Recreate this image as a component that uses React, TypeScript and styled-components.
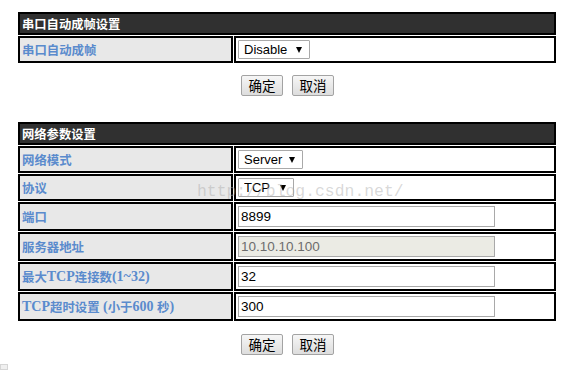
import React from "react";
import styled, { createGlobalStyle } from "styled-components";

const Global = createGlobalStyle`
  html, body { margin: 0; padding: 0; background: #fff; }
  body { font-family: "Liberation Sans", Arial, "Noto Sans CJK SC", sans-serif; }
`;

const Page = styled.div`
  position: relative;
  width: 586px;
  height: 370px;
  overflow: hidden;
  display: flex;
  flex-direction: column;
`;

const Content = styled.div`
  padding: 12px 0 0 18px;
  width: 538px;
  display: flex;
  flex-direction: column;
`;

const Section = styled.div<{ $mt?: number }>`
  display: flex;
  flex-direction: column;
  gap: 1px;
  margin-top: ${(p) => p.$mt ?? 0}px;
`;

const Header = styled.div`
  box-sizing: border-box;
  height: 23px;
  background: #303030;
  border: 2px solid #000;
  color: #fff;
  font: bold 12.3px "Liberation Serif", "Noto Sans CJK SC", serif;
  display: flex;
  align-items: center;
  padding-left: 2px;
`;

const Row = styled.div<{ $h: number }>`
  display: grid;
  grid-template-columns: 215px 1fr;
  column-gap: 1px;
  height: ${(p) => p.$h}px;
`;

const LabelCell = styled.div`
  box-sizing: border-box;
  border: 2px solid #000;
  background: #e8e8e8;
  color: #5a8bcd;
  font: bold 12.4px "Liberation Serif", "Noto Sans CJK SC", serif;
  display: flex;
  align-items: center;
  padding-left: 2px;
  white-space: pre;
`;

const Latin = styled.span`
  font-size: 14px;
`;

const ValueCell = styled.div`
  box-sizing: border-box;
  border: 2px solid #000;
  background: #fff;
  display: flex;
  align-items: center;
  padding-left: 2px;
`;

const SelectBox = styled.div<{ $w: number }>`
  position: relative;
  box-sizing: border-box;
  width: ${(p) => p.$w}px;
  height: 19px;
  border: 1px solid #a9a9a9;
  border-radius: 1px;
  background: #fff;
  display: flex;
  align-items: center;
`;

const NativeSelect = styled.select`
  appearance: none;
  -webkit-appearance: none;
  border: none;
  outline: none;
  background: transparent;
  width: 100%;
  height: 100%;
  padding: 0 0 0 5px;
  font: 13px "Liberation Sans", Arial, sans-serif;
  color: #000;
`;

const Arrow = styled.span`
  position: absolute;
  right: 7px;
  top: 6px;
  width: 0;
  height: 0;
  border-left: 3px solid transparent;
  border-right: 3px solid transparent;
  border-top: 6px solid #000;
  pointer-events: none;
`;

const TextInput = styled.input<{ $disabledLook?: boolean }>`
  box-sizing: border-box;
  width: 257px;
  height: 21px;
  border: 1px solid #a9a9a9;
  background: ${(p) => (p.$disabledLook ? "#ebebe4" : "#fff")};
  padding: 0 2px;
  font: 13.5px "Liberation Sans", Arial, sans-serif;
  color: ${(p) => (p.$disabledLook ? "#6d6d6d" : "#000")};
  outline: none;
`;

const ButtonRow = styled.div<{ $mt: number }>`
  display: flex;
  justify-content: center;
  gap: 9px;
  margin-top: ${(p) => p.$mt}px;
  padding-left: 1px;
`;

const Button = styled.button`
  box-sizing: border-box;
  width: 42px;
  height: 21px;
  border: 1px solid #a3a3a3;
  border-radius: 2px;
  background: linear-gradient(#f6f6f6, #dddddd);
  font: 13.5px "Noto Sans CJK SC", sans-serif;
  color: #000;
  padding: 0;
  display: flex;
  align-items: center;
  justify-content: center;
  line-height: 1;
`;

const Corner = styled.div`
  margin-top: 9px;
  width: 8px;
  height: 6px;
  box-sizing: border-box;
  border: 1px solid #d6d6d6;
  background: #f0f0f0;
`;

const Watermark = styled.div`
  position: absolute;
  left: 197px;
  top: 182px;
  font: 16.4px "Liberation Mono", "Courier New", monospace;
  color: rgba(170, 170, 170, 0.45);
  pointer-events: none;
  white-space: nowrap;
`;

function Select({ value, options, width }: { value: string; options: string[]; width: number }) {
  return (
    <SelectBox $w={width}>
      <NativeSelect defaultValue={value}>
        {options.map((o) => (
          <option key={o}>{o}</option>
        ))}
      </NativeSelect>
      <Arrow />
    </SelectBox>
  );
}

const NB = "\u00a0";

export default function App() {
  return (
    <Page>
      <Global />
      <Content>
        <Section>
          <Header>串口自动成帧设置</Header>
          <Row $h={27}>
            <LabelCell>串口自动成帧</LabelCell>
            <ValueCell>
              <Select value="Disable" options={["Disable", "Enable"]} width={72} />
            </ValueCell>
          </Row>
        </Section>
        <ButtonRow $mt={12}>
          <Button>确定</Button>
          <Button>取消</Button>
        </ButtonRow>

        <Section $mt={26}>
          <Header>网络参数设置</Header>
          <Row $h={27}>
            <LabelCell>网络模式</LabelCell>
            <ValueCell>
              <Select value="Server" options={["Server", "Client"]} width={65} />
            </ValueCell>
          </Row>
          <Row $h={27}>
            <LabelCell>协议</LabelCell>
            <ValueCell>
              <Select value="TCP" options={["TCP", "UDP"]} width={56} />
            </ValueCell>
          </Row>
          <Row $h={29}>
            <LabelCell>端口</LabelCell>
            <ValueCell>
              <TextInput defaultValue="8899" />
            </ValueCell>
          </Row>
          <Row $h={29}>
            <LabelCell>服务器地址</LabelCell>
            <ValueCell>
              <TextInput defaultValue="10.10.10.100" $disabledLook readOnly />
            </ValueCell>
          </Row>
          <Row $h={29}>
            <LabelCell>
              <span>最大</span>
              <Latin>TCP</Latin>
              <span>连接数</span>
              <Latin>(1~32)</Latin>
            </LabelCell>
            <ValueCell>
              <TextInput defaultValue="32" />
            </ValueCell>
          </Row>
          <Row $h={29}>
            <LabelCell>
              <Latin>TCP</Latin>
              <span>超时设置</span>
              <Latin>{NB + "("}</Latin>
              <span>小于</span>
              <Latin>{"600" + NB}</Latin>
              <span>秒</span>
              <Latin>)</Latin>
            </LabelCell>
            <ValueCell>
              <TextInput defaultValue="300" />
            </ValueCell>
          </Row>
        </Section>
        <ButtonRow $mt={13}>
          <Button>确定</Button>
          <Button>取消</Button>
        </ButtonRow>
      </Content>
      <Corner />
      <Watermark>http://blog.csdn.net/</Watermark>
    </Page>
  );
}
